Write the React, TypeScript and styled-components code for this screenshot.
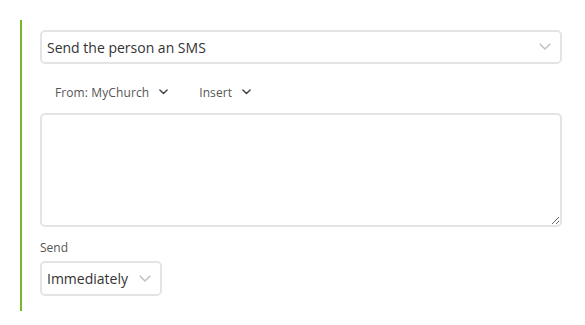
import styled, { createGlobalStyle } from 'styled-components'

const GlobalStyle = createGlobalStyle`
  html, body {
    margin: 0;
    background: #fff;
    font-family: "Open Sans", "Noto Sans", sans-serif;
    color: #333;
  }
`

const Panel = styled.div`
  margin: 20px 0 0 20px;
  border-left: 2px solid #76b82a;
  padding: 10px 23px 15px 18px;
  display: flex;
  flex-direction: column;
`

const SelectBox = styled.div<{ $width?: string }>`
  box-sizing: border-box;
  width: ${({ $width }) => $width || '100%'};
  height: ${({ $width }) => ($width ? '35px' : '34px')};
  border: 2px solid #e4e4e4;
  border-radius: 5px;
  display: flex;
  align-items: center;
  justify-content: space-between;
  padding: 0 9px 0 5px;
  font-size: 14px;
  color: #333;
  background: #fff;
`

const Toolbar = styled.div`
  display: flex;
  align-items: center;
  gap: 31px;
  height: 28px;
  margin: 14px 0 7px;
  padding-left: 15px;
`

const ToolButton = styled.div`
  display: flex;
  align-items: center;
  gap: 10px;
  font-size: 12px;
  letter-spacing: 0.1px;
  color: #555;
`

const TextArea = styled.textarea`
  display: block;
  box-sizing: border-box;
  width: 100%;
  height: 114px;
  border: 2px solid #e4e4e4;
  border-radius: 5px;
  margin: 0;
  outline: none;
  font-family: inherit;
  font-size: 14px;
`

const Label = styled.div`
  font-size: 12px;
  line-height: 16px;
  color: #555;
  margin: 13px 0 5px;
`

function Chevron({ size = 10, color = '#c2c2c2', weight = 1.3 }: { size?: number; color?: string; weight?: number }) {
  return (
    <svg width={size} height={size * 0.6} viewBox="0 0 10 6" fill="none">
      <path d="M1 1 L5 5 L9 1" stroke={color} strokeWidth={weight} strokeLinecap="round" strokeLinejoin="round" />
    </svg>
  )
}

export default function App() {
  return (
    <>
      <GlobalStyle />
      <Panel>
        <SelectBox>
          <span>Send the person an SMS</span>
          <Chevron size={12} />
        </SelectBox>
        <Toolbar>
          <ToolButton>
            From: MyChurch <Chevron size={9} color="#444" weight={1.6} />
          </ToolButton>
          <ToolButton>
            Insert <Chevron size={9} color="#444" weight={1.6} />
          </ToolButton>
        </Toolbar>
        <TextArea />
        <Label>Send</Label>
        <SelectBox $width="122px">
          <span>Immediately</span>
          <Chevron size={12} />
        </SelectBox>
      </Panel>
    </>
  )
}
